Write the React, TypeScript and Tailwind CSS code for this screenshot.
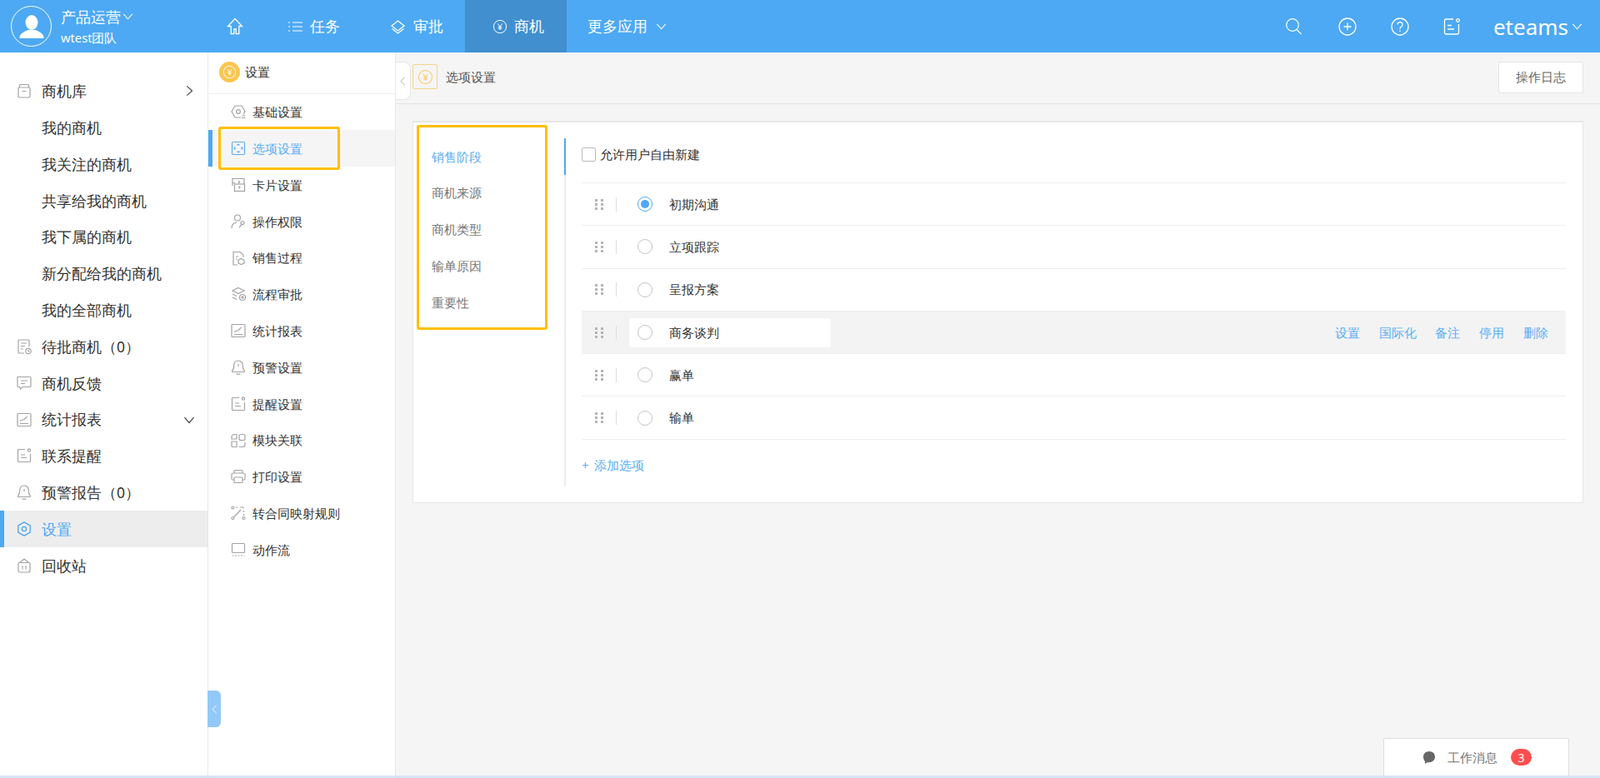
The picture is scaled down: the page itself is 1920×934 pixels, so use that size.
import type { ReactNode } from "react";

const Svg = ({ children, size = 20, className = "" }: { children: ReactNode; size?: number; className?: string }) => (
  <svg width={size} height={size} viewBox="0 0 20 20" fill="none" stroke="currentColor" strokeWidth="1.2" className={className}>
    {children}
  </svg>
);

const Chevron = ({ dir, className = "" }: { dir: "down" | "right" | "left"; className?: string }) => {
  const d = dir === "down" ? "M2 6l8 9 8-9" : dir === "right" ? "M6 2l9 8-9 8" : "M14 2l-9 8 9 8";
  return (
    <svg width="20" height="20" viewBox="0 0 20 20" fill="none" stroke="currentColor" strokeWidth="1.7" className={className}>
      <path d={d} />
    </svg>
  );
};

const icons: Record<string, ReactNode> = {
  box: (<><rect x="3" y="6" width="14" height="12" rx="1.2" /><path d="M4 6l1-3.500h10L16 6M7.500 10.500h5" /></>),
  doc: (<><path d="M10 18H4a1 1 0 0 1-1-1V3a1 1 0 0 1 1-1h11a1 1 0 0 1 1 1v7" /><path d="M6 6h7M6 9.500h5M6 13h3" /><circle cx="15" cy="15.500" r="3.200" /><path d="M15 14v1.700h1.300" /></>),
  chat: (<><path d="M3 2.500h14a1 1 0 0 1 1 1v10a1 1 0 0 1-1 1H8l-2.500 2.500-1-2.500H3a1 1 0 0 1-1-1v-10a1 1 0 0 1 1-1z" /><path d="M6 7h8M6 10.500h5" /></>),
  chart: (<><rect x="2" y="2.500" width="16" height="15" rx="1" /><path d="M5 11.500l3-1.500 2-.5L13.500 6M5 14.500h10" /></>),
  note: (<><path d="M11 2.500H3.500a1 1 0 0 0-1 1v13a1 1 0 0 0 1 1h13a1 1 0 0 0 1-1V8" /><circle cx="16" cy="3.500" r="1.600" /><path d="M6 9h5M6 12.500h7" /></>),
  bell: (<><path d="M10 2c-3.500 0-5.300 2.700-5.300 5.800 0 3.500-.6 5-1.900 6.200-.5.500-.2 1.500.6 1.500h13.200c.8 0 1.100-1 .6-1.500-1.300-1.200-1.900-2.700-1.900-6.200C15.300 4.700 13.500 2 10 2z" /><path d="M7.500 18.200h5M10 6v3" /></>),
  hex: (<><path d="M10 1.800l7.200 4.100v8.200L10 18.200l-7.200-4.100V5.900z" strokeWidth="1.400" /><circle cx="10" cy="10" r="2.600" strokeWidth="1.400" /></>),
  trash: (<><path d="M4 6.500h12a1 1 0 0 1 1 1V16a2 2 0 0 1-2 2H5a2 2 0 0 1-2-2V7.500a1 1 0 0 1 1-1z" /><path d="M4.500 6.500L10 2l5.500 4.500M8 10v4.500M12 10v4.500" /></>),
  gear: (<><path d="M6 3h8l4 7-2 3.500M13 17H6l-4-7 4-7" /><circle cx="10" cy="10" r="2.400" /><path d="M14 15h4.500M14 17.500h4.500" /></>),
  option: (<><rect x="2.500" y="2.500" width="15" height="15" rx="1.500" /><path d="M8.500 6.500L10 5l1.500 1.500M8.500 13.500L10 15l1.500-1.500M6.500 8.500L5 10l1.500 1.500M13.500 8.500L15 10l-1.500 1.500" /></>),
  card: (<><path d="M3 11V2.500h14V9M3 7.500h3" /><rect x="5.500" y="9" width="12" height="8.500" /><path d="M10 5l1.500 1.500L10 8M10.500 11.500l1.500 1.500-1.500 1.500" /></>),
  perm: (<><circle cx="9" cy="5.500" r="3.500" /><path d="M2 18c0-4 2.500-6.500 6-7" /><circle cx="15" cy="11.500" r="2" /><path d="M14 13.500L11 17" /></>),
  sale: (<><path d="M9 18H4V2.500h8L16 6v3" /><path d="M7 8h3M7 11h2" /><path d="M13.500 10.500l3.500 1.700v3.600l-3.500 1.700-3.500-1.700v-3.600z" /></>),
  flow: (<><path d="M10 2.500l7 3.500-7 3.500L3 6zM3 10l5 2.500M3 14l5 2.500" /><circle cx="15" cy="14" r="3.500" /><circle cx="15" cy="14" r="1.200" /></>),
  module: (<><path d="M8 2.500H5a3 3 0 0 0-3 3V8h6zM2 11h6v6.500H3a1 1 0 0 1-1-1z" /><rect x="11" y="2.500" width="7" height="7" rx="2" /><path d="M11 17.500h4a3 3 0 0 0 3-3V12" /></>),
  print: (<><path d="M5 6V3.500a1 1 0 0 1 1-1h8a1 1 0 0 1 1 1V6" /><path d="M5 14H3.500a1.500 1.500 0 0 1-1.500-1.500V8a2 2 0 0 1 2-2h12a2 2 0 0 1 2 2v4.500a1.500 1.500 0 0 1-1.500 1.500H15" /><rect x="5" y="11" width="10" height="6.500" rx="1" /></>),
  map: (<><circle cx="3.500" cy="3.500" r="1.500" /><circle cx="3.500" cy="16" r="1.500" /><circle cx="16.500" cy="16" r="1.500" /><path d="M7 3h2M12 3h3.500l1 1M16.500 7v2M16.500 11v2M5 14.500L13 6" /></>),
  stream: (<><rect x="2.500" y="2.500" width="15" height="11" rx="1" /><path d="M2.500 17h15" strokeDasharray="2 1.500" /></>),
};

const MenuIcon = ({ name, className = "text-[#a3a3a3]" }: { name: string; className?: string }) => (
  <Svg size={20} className={`-ml-[2px] ${className}`}>{icons[name]}</Svg>
);

const YuanCircle = ({ size, className = "" }: { size: number; className?: string }) => (
  <svg width={size} height={size} viewBox="0 0 20 20" fill="none" stroke="currentColor" strokeWidth="1.1" className={className}>
    <circle cx="10" cy="10" r="8.500" />
    <path d="M7 6l3 4 3-4M10 10v4.500M7.500 10.500h5M7.500 12.500h5" />
  </svg>
);

const mainMenu = [
  { label: "商机库", icon: "box", arrow: "right" },
  { label: "我的商机" },
  { label: "我关注的商机" },
  { label: "共享给我的商机" },
  { label: "我下属的商机" },
  { label: "新分配给我的商机" },
  { label: "我的全部商机" },
  { label: "待批商机（0）", icon: "doc" },
  { label: "商机反馈", icon: "chat" },
  { label: "统计报表", icon: "chart", arrow: "down" },
  { label: "联系提醒", icon: "note" },
  { label: "预警报告（0）", icon: "bell" },
  { label: "设置", icon: "hex", active: true },
  { label: "回收站", icon: "trash" },
];

const subMenu = [
  { label: "基础设置", icon: "gear" },
  { label: "选项设置", icon: "option", active: true },
  { label: "卡片设置", icon: "card" },
  { label: "操作权限", icon: "perm" },
  { label: "销售过程", icon: "sale" },
  { label: "流程审批", icon: "flow" },
  { label: "统计报表", icon: "chart" },
  { label: "预警设置", icon: "bell" },
  { label: "提醒设置", icon: "note" },
  { label: "模块关联", icon: "module" },
  { label: "打印设置", icon: "print" },
  { label: "转合同映射规则", icon: "map" },
  { label: "动作流", icon: "stream" },
];

const tabs = ["销售阶段", "商机来源", "商机类型", "输单原因", "重要性"];
const stages = ["初期沟通", "立项跟踪", "呈报方案", "商务谈判", "赢单", "输单"];
const actions = ["设置", "国际化", "备注", "停用", "删除"];

const TopBar = () => (
  <div className="flex h-[63px] items-center bg-[#4da9f3] text-white">
    <div className="ml-[13px] flex h-[49px] w-[49px] items-center justify-center overflow-hidden rounded-full border border-white">
      <svg width="30" height="28" viewBox="0 0 30 28" fill="white">
        <ellipse cx="15" cy="9" rx="7.500" ry="9" />
        <path d="M0.500 28c0-5 3-7 10-10h9c7 3 10 5 10 10z" />
      </svg>
    </div>
    <div className="ml-[11px] w-[197px]">
      <div className="-mt-[1px] flex h-[26px] items-center text-[17.5px] leading-[26px]">
        产品运营
        <Chevron dir="down" className="ml-[2px] h-[13px] w-[13px]" />
      </div>
      <div className="mt-[1px] text-[14.7px] leading-[22px]">wtest团队</div>
    </div>
    <svg width="22" height="21" viewBox="0 0 22 21" fill="none" stroke="white" strokeWidth="1.3" className="ml-[1px]">
      <path d="M11 1.500L2.500 10.500h3.700v9h3.600v-5.500h2.400v5.500h3.600v-9h3.700z" />
    </svg>
    <div className="ml-[53px] flex items-center text-[17.5px]">
      <svg width="17" height="14" viewBox="0 0 17 14" stroke="white" strokeWidth="1.2">
        <path d="M0 2h2M5 2h12M0 7h2M5 7h12M0 12h2M5 12h12" />
      </svg>
      <span className="ml-[9px]">任务</span>
    </div>
    <div className="ml-[60px] flex items-center text-[17.5px]">
      <svg width="19" height="20" viewBox="0 0 19 20" fill="none" stroke="white" strokeWidth="1.3">
        <path d="M9.500 3L17 9l-7.500 6L2 9zM2.500 12.500l7 5.500 7-5.500" />
      </svg>
      <span className="ml-[9px]">审批</span>
    </div>
    <div className="ml-[26px] flex h-full w-[122px] items-center bg-[#418fcf] pl-[33px] text-[17.5px]">
      <YuanCircle size={18} />
      <span className="ml-[8px]">商机</span>
    </div>
    <div className="ml-[25px] flex items-center text-[17.5px]">
      更多应用
      <Chevron dir="down" className="ml-[10px] h-[13px] w-[13px]" />
    </div>
    <div className="ml-auto flex items-center">
      <svg width="21" height="21" viewBox="0 0 21 21" fill="none" stroke="white" strokeWidth="1.2">
        <circle cx="9" cy="9" r="7.300" />
        <path d="M14 14.500l5.500 5.500" />
      </svg>
      <svg width="22" height="22" viewBox="0 0 22 22" fill="none" stroke="white" strokeWidth="1.3" className="ml-[43px]">
        <circle cx="11" cy="11" r="10" />
        <path d="M11 6.500v9M6.500 11h9" />
      </svg>
      <svg width="22" height="22" viewBox="0 0 22 22" fill="none" stroke="white" strokeWidth="1.3" className="ml-[41px]">
        <circle cx="11" cy="11" r="10" />
        <path d="M8 8.500a3 3 0 1 1 4.500 2.600c-1 .6-1.500 1.200-1.500 2.600M11 15.500v1.500" />
      </svg>
      <svg width="21" height="22" viewBox="0 0 21 22" fill="none" stroke="white" strokeWidth="1.3" className="ml-[41px]">
        <path d="M12 2H3a1.500 1.500 0 0 0-1.500 1.500v15A1.500 1.500 0 0 0 3 20h14a1.500 1.500 0 0 0 1.500-1.500V8" />
        <circle cx="17.500" cy="3.500" r="1.800" />
        <path d="M5 9.500h5M5 14h8" />
      </svg>
      <span className="ml-[39px] font-['Lato',sans-serif] text-[26px] leading-none">eteams</span>
      <Chevron dir="down" className="mr-[21px] ml-[4px] h-[13px] w-[13px]" />
    </div>
  </div>
);

const MainSidebar = () => (
  <div className="relative h-full w-[250px] shrink-0 border-r border-[#e8e8e8] bg-white pt-[24.5px] text-[17.5px] text-[#333]">
    {mainMenu.map((item) => (
      <div
        key={item.label}
        className={`flex h-[43.8px] items-center ${item.active ? "border-l-[5px] border-[#4da9f3] bg-[#ededed] pl-[16px] text-[#4da9f3]" : "pl-[21px]"}`}
      >
        <div className="w-[29px]">
          {item.icon && <MenuIcon name={item.icon} className={item.active ? "text-[#4da9f3]" : "text-[#a3a3a3]"} />}
        </div>
        <span>{item.label}</span>
        {item.arrow && (
          <Chevron dir={item.arrow as "down" | "right"} className="absolute left-[220px] h-[14px] w-[14px] text-[#444]" />
        )}
      </div>
    ))}
    <div className="absolute top-[766px] left-[249px] z-10 flex h-[44px] w-[16px] items-center justify-center rounded-r-[6px] bg-[#93c9f8] text-white">
      <Chevron dir="left" className="h-[11px] w-[11px]" />
    </div>
  </div>
);

const SubSidebar = () => (
  <div className="relative h-full w-[225px] shrink-0 border-r border-[#e8e8e8] bg-white text-[15px] text-[#333]">
    <div className="flex h-[49.5px] items-center border-b border-[#eeeeee] pb-[2px] pl-[13px]">
      <div className="flex h-[25px] w-[25px] items-center justify-center rounded-full bg-[#fbc64f] text-white">
        <YuanCircle size={17} />
      </div>
      <span className="ml-[6px]">设置</span>
    </div>
    {subMenu.map((item) => (
      <div
        key={item.label}
        className={`flex h-[43.8px] items-center ${item.active ? "border-l-[5px] border-[#4da9f3] bg-[#f5f5f5] pl-[23px] text-[#5aaef5]" : "pl-[28px]"}`}
      >
        <div className="w-[25px]">
          <MenuIcon name={item.icon} className={item.active ? "text-[#5aaef5]" : "text-[#a3a3a3]"} />
        </div>
        <span>{item.label}</span>
      </div>
    ))}
    <div className="absolute top-[89px] left-[12px] h-[52px] w-[146px] rounded-[3px] border-[3px] border-[#ffbf00]" />
  </div>
);

const StageRow = ({ label, index }: { label: string; index: number }) => {
  const hover = index === 3;
  return (
    <div className={`flex h-[51.3px] items-center border-b border-[#eeeeee] ${hover ? "bg-[#f3f3f3]" : ""}`}>
      <div className="ml-[16px] grid grid-cols-2 gap-x-[4px] gap-y-[2px]">
        {[0, 1, 2, 3, 4, 5].map((d) => (
          <span key={d} className="h-[3px] w-[3px] bg-[#b4b4b4]" />
        ))}
      </div>
      <div className="ml-[15px] h-[17px] w-px bg-[#dddddd]" />
      <div className={`ml-[15px] flex h-[35px] w-[242px] items-center rounded-[2px] pl-[10px] ${hover ? "bg-white" : ""}`}>
        <span className={`flex h-[18px] w-[18px] items-center justify-center rounded-full border ${index === 0 ? "border-[#4da9f3]" : "border-[#c4c4c4]"}`}>
          {index === 0 && <span className="h-[10px] w-[10px] rounded-full bg-[#4da9f3]" />}
        </span>
        <span className="ml-[20px] text-[#333]">{label}</span>
      </div>
      {hover && (
        <div className="mr-[21px] ml-auto flex gap-[22.8px] text-[#5aaef5]">
          {actions.map((a) => (
            <span key={a}>{a}</span>
          ))}
        </div>
      )}
    </div>
  );
};

const Content = () => (
  <div className="relative h-full flex-1 bg-[#f5f5f5] text-[15px]">
    <div className="flex h-[62px] items-center border-b border-[#e4e4e4] pr-[20px]">
      <div className="mt-[11px] flex h-[46px] w-[18px] items-center justify-center self-start rounded-r-[8px] border border-l-0 border-[#e4e4e4] bg-white text-[#aaaaaa]">
        <Chevron dir="left" className="h-[11px] w-[11px]" />
      </div>
      <div className="mb-[3px] ml-[2px] flex h-[30px] w-[30px] items-center justify-center rounded-[2px] border border-[#f6d48a] text-[#f8cc6a]">
        <YuanCircle size={19} />
      </div>
      <span className="mb-[3px] ml-[10px] text-[#555]">选项设置</span>
      <div className="mb-[2px] ml-auto flex h-[38px] w-[102px] items-center justify-center rounded-[3px] border border-[#e4e4e4] bg-white text-[#666]">
        操作日志
      </div>
    </div>
    <div className="mt-[20px] mr-[20px] ml-[20px] flex h-[459px] border border-t-2 border-[#e6e6e6] bg-white">
      <div className="relative w-[181px] shrink-0 pt-[19px]">
        {tabs.map((t, i) => (
          <div key={t} className={`flex h-[43.8px] items-center pl-[22px] ${i === 0 ? "text-[#5aaef5]" : "text-[#777]"}`}>
            {t}
          </div>
        ))}
        <div className="absolute top-[3px] left-[4px] h-[246px] w-[157px] rounded-[3px] border-[3px] border-[#ffbf00]" />
      </div>
      <div className="relative mt-[19px] mb-[19px] flex-1 border-l-2 border-[#eeeeee] pl-[19px]">
        <div className="absolute top-0 left-[-2px] h-[44px] w-[2px] bg-[#4da9f3]" />
        <div className="mr-[20px]">
          <div className="flex h-[54px] items-center border-b border-[#eeeeee] pb-[14px] text-[#333]">
            <span className="h-[17px] w-[17px] rounded-[2px] border border-[#bbbbbb]" />
            <span className="ml-[5px]">允许用户自由新建</span>
          </div>
          {stages.map((s, i) => (
            <StageRow key={s} label={s} index={i} />
          ))}
          <div className="mt-[19px] flex items-center text-[#5aaef5]">
            <span className="w-[15px]">+</span>
            <span>添加选项</span>
          </div>
        </div>
      </div>
    </div>
    <div className="absolute top-[823px] right-[37px] flex h-[45px] w-[223px] items-center rounded-t-[2px] border border-b-0 border-[#dddddd] bg-white pl-[46px] text-[#777]">
      <svg width="16" height="17" viewBox="0 0 16 17" fill="#666">
        <path d="M8 1c4 0 7 2.800 7 6.600s-3 6.700-7 6.700c-.8 0-1.500-.1-2.200-.3L3 16l-.2-3.200C1.700 11.500 1 9.700 1 7.600 1 3.800 4 1 8 1z" />
      </svg>
      <span className="ml-[14px]">工作消息</span>
      <span className="ml-[16px] flex h-[20px] w-[25px] items-center justify-center rounded-full bg-[#ff4d4f] text-[14px] text-white">3</span>
    </div>
  </div>
);

export default function App() {
  return (
    <div className="relative h-[934px] w-[1920px] overflow-hidden bg-white font-['Liberation_Sans','Noto_Sans_CJK_SC',sans-serif]">
      <TopBar />
      <div className="flex h-[871px]">
        <MainSidebar />
        <SubSidebar />
        <Content />
      </div>
      <div className="absolute bottom-0 left-0 h-[3px] w-full bg-[#d6e4f7]" />
    </div>
  );
}
